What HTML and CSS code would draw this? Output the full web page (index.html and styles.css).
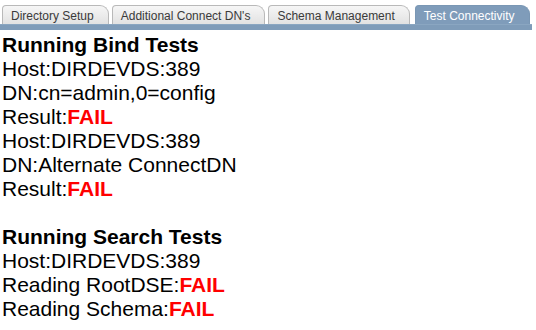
FILE: index.html
```html
<!DOCTYPE html>
<html>
<head>
<meta charset="utf-8">
<link rel="stylesheet" href="styles.css">
</head>
<body>
<div class="tabstrip">
  <div class="tab">Directory Setup</div>
  <div class="tab">Additional Connect DN's</div>
  <div class="tab">Schema Management</div>
  <div class="tab active">Test Connectivity</div>
</div>
<div class="bar"></div>
<div class="content">
  <div class="line head">Running Bind Tests</div>
  <div class="line">Host:DIRDEVDS:389</div>
  <div class="line">DN:cn=admin,0=config</div>
  <div class="line">Result:<span class="fail">FAIL</span></div>
  <div class="line">Host:DIRDEVDS:389</div>
  <div class="line">DN:Alternate ConnectDN</div>
  <div class="line">Result:<span class="fail">FAIL</span></div>
  <div class="line blank"></div>
  <div class="line head">Running Search Tests</div>
  <div class="line">Host:DIRDEVDS:389</div>
  <div class="line">Reading RootDSE:<span class="fail">FAIL</span></div>
  <div class="line">Reading Schema:<span class="fail">FAIL</span></div>
</div>
</body>
</html>
```
FILE: styles.css
```css
html, body {
  margin: 0;
  padding: 0;
  background: #ffffff;
}
body {
  font-family: "Liberation Sans", Arial, sans-serif;
  width: 536px;
}
.tabstrip {
  display: flex;
  gap: 2px;
  padding: 5px 0 0 2px;
  height: 19px;
  box-sizing: content-box;
}
.tab {
  box-sizing: border-box;
  height: 19px;
  padding: 2px 14px 0 8px;
  font-size: 12px;
  line-height: 16px;
  color: #3a3a3a;
  border: 1px solid #b9b9b9;
  border-bottom: none;
  border-radius: 4px 9px 0 0;
  background: linear-gradient(#f6f6f6, #e2e2e2);
  white-space: nowrap;
}
.tab + .tab {
  margin-left: 1px;
}
.tab.active {
  margin-left: 3px;
  color: #ffffff;
  background: #7f9cba;
  border-color: #7a97b4;
}
.bar {
  height: 6px;
  background: #7f9cb9;
  border-top: 1px solid #8aa6c1;
  box-sizing: border-box;
  width: 532px;
}
.content {
  margin-top: 3px;
  padding-left: 2px;
  font-size: 21px;
  line-height: 24px;
  color: #000000;
}
.line {
  height: 24px;
  white-space: nowrap;
}
.head {
  font-weight: bold;
}
.fail {
  color: #ff0000;
  font-weight: bold;
}
```
